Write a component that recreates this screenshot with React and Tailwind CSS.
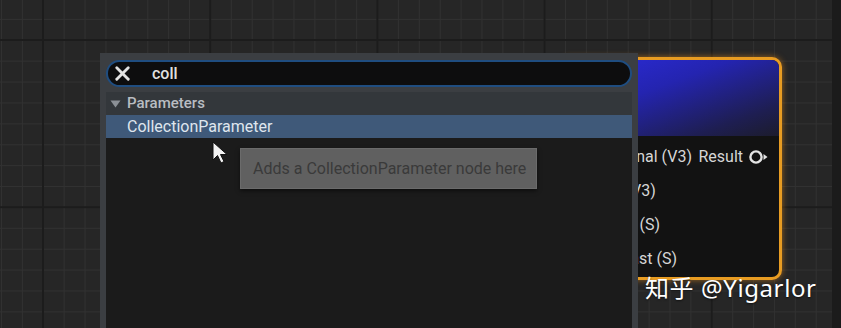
import React from 'react';
import { X } from 'lucide-react';

const font = { fontFamily: 'Roboto, "Liberation Sans", sans-serif' };

// input labels on the material node, right edges line up with what peeks out past the menu
const nodeRows = [
  { label: 'Original (V3)', w: 'w-[129px]', output: 'Result' },
  { label: 'Position (V3)', w: 'w-[89px]' },
  { label: 'Radius (S)', w: 'w-[97px]' },
  { label: 'Contrast (S)', w: 'w-[114px]' },
];

const OutputPin = () => (
  <svg width="20" height="14" viewBox="0 0 20 14" className="ml-[6px]">
    <circle cx="7" cy="7" r="5.6" fill="none" stroke="#e4e4e4" strokeWidth="2.4" />
    <path d="M14.5 4 L18.5 7 L14.5 10 Z" fill="#e4e4e4" />
  </svg>
);

const MaterialNode = () => (
  <div className="absolute left-[560px] top-[57px] w-[222px] h-[223px] rounded-[10px] border-[3px] border-[#e89c22] shadow-[0_0_6px_rgba(230,140,30,0.6)] bg-[#121212] overflow-hidden">
    <div className="h-[76px] bg-[linear-gradient(160deg,#2c2cdc_0%,#2424b0_40%,#1e1e52_80%,#1c1c2c_100%)]" />
    <div className="flex flex-col pt-[4px] text-[16px] text-[#d6d6d6]">
      {nodeRows.map((r) => (
        <div key={r.label} className="flex items-center h-[34px] pr-[10px]">
          <span className={`${r.w} text-right whitespace-nowrap`}>{r.label}</span>
          {r.output && (
            <div className="ml-auto flex items-center">
              <span>{r.output}</span>
              <OutputPin />
            </div>
          )}
        </div>
      ))}
    </div>
  </div>
);

const Cursor = () => (
  <svg width="18" height="24" viewBox="0 0 18 24" className="absolute left-[212px] top-[141px]">
    <path d="M1 1 L1 19 L5.5 14.5 L9 22 L12 20.5 L8.5 13.5 L15 13.5 Z" fill="#f2f2f2" stroke="#111" strokeWidth="1" />
  </svg>
);

const ActionMenu = () => (
  <div className="absolute left-[100px] top-[53px] w-[538px] bottom-0 flex flex-col bg-[#3b3e42] pl-[6px] pr-[6px] pt-[7px]">
    <div className="flex items-center h-[27px] rounded-full border-2 border-[#1f4d80] bg-[#0d0d0e] pl-[3px]">
      <X size={23} strokeWidth={3} color="#e2e2e2" />
      <span className="ml-[18px] text-[16px] font-medium text-[#e0e0e0]">coll</span>
    </div>
    <div className="mt-[5px] flex items-center h-[23px] bg-[#33373b] pl-[4px] text-[15px] font-medium text-[#b9bdc2]">
      <svg width="11" height="8" viewBox="0 0 11 8" className="mr-[6px]">
        <path d="M0.5 0.5 L10.5 0.5 L5.5 7.5 Z" fill="#8b9096" />
      </svg>
      Parameters
    </div>
    <div className="flex items-center h-[23px] bg-[#3f5979] pl-[21px] text-[16px] text-[#dfe6ee]">
      CollectionParameter
    </div>
    <div className="flex-1 bg-[#1b1b1b]" />
  </div>
);

export default function App() {
  return (
    <div className="flex w-full h-[328px] overflow-hidden" style={font}>
      <div className="relative flex-1 bg-[#262626] bg-[linear-gradient(#1c1c1c_2px,transparent_2px),linear-gradient(90deg,#1c1c1c_2px,transparent_2px),linear-gradient(#313131_1px,transparent_1px),linear-gradient(90deg,#313131_1px,transparent_1px)] bg-size-[167.2px_167.2px,167.2px_167.2px,20.9px_20.9px,20.9px_20.9px] bg-position-[42px_39px,42px_39px,1px_-2px,1px_-2px]">
        <MaterialNode />
        <ActionMenu />

        <div className="absolute left-[240px] top-[148px] w-[297px] h-[41px] flex items-center pl-[12px] bg-[#606060] border border-[#6b6b6b] shadow-[0_2px_4px_rgba(0,0,0,0.5)] text-[16px] text-[#3a3a3a]">
          Adds a CollectionParameter node here
        </div>

        <Cursor />

        <div
          className="absolute left-[645px] top-[270px] text-[24px] text-white tracking-[0.6px] [text-shadow:0_1px_2px_rgba(0,0,0,0.6)]"
          style={{ fontFamily: '"Noto Sans", "Noto Sans CJK SC", sans-serif' }}
        >
          知乎 @Yigarlor
        </div>
      </div>
      <div className="w-[9px] bg-[#1b1b1b]" />
    </div>
  );
}
